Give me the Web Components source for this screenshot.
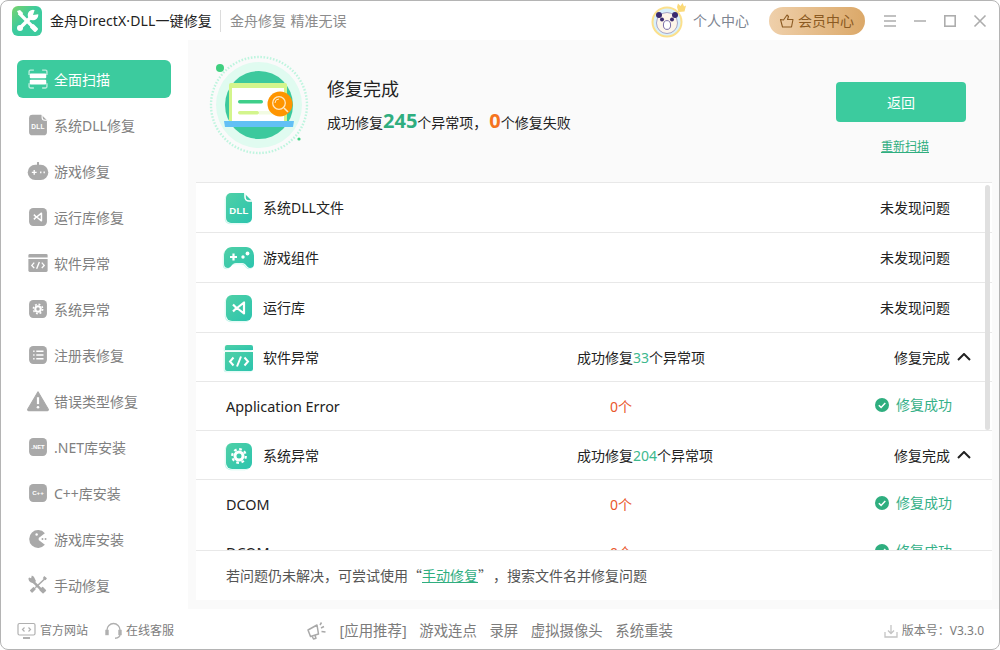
<!DOCTYPE html>
<html lang="zh-CN">
<head>
<meta charset="utf-8">
<title>金舟DirectX·DLL一键修复</title>
<style>
html, body { margin: 0; background: #fff; }
body { width: 1000px; height: 650px; overflow: hidden; font-family: "Noto Sans", "Noto Sans CJK SC", sans-serif; }
</style>
</head>
<body>
<app-window>
    <title-bar slot="top"></title-bar>
    <side-nav slot="side">
        <nav-item icon="scan" active>全面扫描</nav-item>
        <nav-item icon="dll">系统DLL修复</nav-item>
        <nav-item icon="bot">游戏修复</nav-item>
        <nav-item icon="vs">运行库修复</nav-item>
        <nav-item icon="code">软件异常</nav-item>
        <nav-item icon="gear">系统异常</nav-item>
        <nav-item icon="list">注册表修复</nav-item>
        <nav-item icon="warn">错误类型修复</nav-item>
        <nav-item icon="net">.NET库安装</nav-item>
        <nav-item icon="cpp">C++库安装</nav-item>
        <nav-item icon="pac">游戏库安装</nav-item>
        <nav-item icon="tools">手动修复</nav-item>
    </side-nav>
    <result-hero slot="main" fixed="245" failed="0"></result-hero>
    <result-list slot="main">
        <scan-row icon="dll" status="未发现问题">系统DLL文件</scan-row>
        <scan-row icon="game" status="未发现问题">游戏组件</scan-row>
        <scan-row icon="vs" status="未发现问题">运行库</scan-row>
        <scan-row icon="code" count="33" status="修复完成" short>软件异常</scan-row>
        <detail-row>Application Error</detail-row>
        <scan-row icon="gear" count="204" status="修复完成" short>系统异常</scan-row>
        <detail-row noline>DCOM</detail-row>
        <detail-row noline>DCOM</detail-row>
    </result-list>
    <foot-bar slot="bottom"></foot-bar>
</app-window>

<script>
// all the artwork sits in a 32x32 box, c = body colour, h = colour of the holes
const glyphs = {
    scan: (c, h) => `
        <path d="M3 10V5a2 2 0 0 1 2-2h5M22 3h5a2 2 0 0 1 2 2v5M29 22v5a2 2 0 0 1-2 2h-5M10 29H5a2 2 0 0 1-2-2v-5" fill="none" stroke="${c}" stroke-width="2" opacity=".65"/>
        <rect x="4" y="8" width="24" height="7" rx="1.5" fill="${c}"/>
        <rect x="4" y="17" width="24" height="7" rx="1.5" fill="${c}"/>`,
    dll: (c, h) => `
        <path d="M8 1h13l8 8v17a5 5 0 0 1-5 5H8a5 5 0 0 1-5-5V6a5 5 0 0 1 5-5z" fill="${c}"/>
        <path d="M22 0v5a4 4 0 0 0 4 4h4" fill="none" stroke="${h}" stroke-width="1.6"/>
        <text x="16" y="22" text-anchor="middle" font-family="Liberation Sans" font-weight="700" font-size="9.500" letter-spacing=".3" fill="${h}">DLL</text>`,
    bot: (c, h) => `
        <rect x="14.5" y="3" width="3" height="6" fill="${c}"/>
        <rect x="1" y="7" width="30" height="22" rx="11" fill="${c}"/>
        <path d="M7 18h7M10.5 14.5v7" stroke="${h}" stroke-width="2"/>
        <path d="M19 18h2M24 18h2" stroke="${h}" stroke-width="2.4"/>`,
    game: (c, h) => `
        <path d="M9 5h14c5 0 8 4 8 9v8c0 3-2 4-4 4-3 0-4-5-8-5h-6c-4 0-5 5-8 5-2 0-4-1-4-4v-8c0-5 3-9 8-9z" fill="${c}"/>
        <path d="M7 15h7M10.5 11.5v7" stroke="${h}" stroke-width="2.2"/>
        <circle cx="20" cy="15" r="1.7" fill="${h}"/><circle cx="24.5" cy="11.5" r="1.9" fill="${h}"/>`,
    vs: (c, h) => `
        <rect x="3" y="3" width="26" height="26" rx="6" fill="${c}"/>
        <path d="M10 12.500l3.500 3.500-3.500 3.500M21 10.500v11L14 16z" fill="none" stroke="${h}" stroke-width="2.200" stroke-linejoin="round"/>`,
    code: (c, h) => `
        <path d="M4 3h24a2 2 0 0 1 2 2v3H2V5a2 2 0 0 1 2-2z" fill="${c}"/>
        <path d="M2 10h28v17a2 2 0 0 1-2 2H4a2 2 0 0 1-2-2z" fill="${c}"/>
        <path d="M10.5 15.5L7 19.5l3.5 4M21.5 15.5l3.5 4-3.5 4M18 14.5l-4 10" fill="none" stroke="${h}" stroke-width="2"/>`,
    gear: (c, h) => `
        <rect x="3" y="3" width="26" height="26" rx="6" fill="${c}"/>
        <circle cx="16" cy="16" r="6.800" fill="none" stroke="${h}" stroke-width="2.200" stroke-dasharray="2.700 2.640"/>
        <circle cx="16" cy="16" r="4" fill="none" stroke="${h}" stroke-width="3"/>`,
    list: (c, h) => `
        <rect x="3" y="3" width="26" height="26" rx="6" fill="${c}"/>
        <path d="M9 10.5h2M9 16h2M9 21.5h2M13.5 10.5H24M13.5 16H24M13.5 21.5H24" stroke="${h}" stroke-width="2.2"/>`,
    warn: (c, h) => `
        <path d="M16 2.5L31 28a1.5 1.5 0 0 1-1.3 2H2.3A1.5 1.5 0 0 1 1 28z" fill="${c}" stroke="${c}" stroke-linejoin="round" stroke-width="1.5"/>
        <path d="M16 10.5v10" stroke="${h}" stroke-width="3.2"/><circle cx="16" cy="25" r="1.9" fill="${h}"/>`,
    net: (c, h) => `
        <rect x="3" y="3" width="26" height="26" rx="6" fill="${c}"/>
        <text x="16" y="19.5" text-anchor="middle" font-family="Liberation Sans" font-weight="700" font-size="8.5" fill="${h}">.NET</text>`,
    cpp: (c, h) => `
        <rect x="3" y="3" width="26" height="26" rx="6" fill="${c}"/>
        <text x="16" y="19.5" text-anchor="middle" font-family="Liberation Sans" font-weight="700" font-size="9" fill="${h}">C++</text>`,
    pac: (c, h) => `
        <path d="M26 7.5a13 13 0 1 0 0 17L17 17.5v-3z" fill="${c}"/>
        <circle cx="14" cy="9.5" r="1.8" fill="${h}"/>
        <circle cx="22.5" cy="16" r="1.4" fill="${c}"/><circle cx="27" cy="16" r="1.4" fill="${c}"/>`,
    tools: (c, h) => `
        <path d="M9 11l12 12" stroke="${c}" stroke-width="3.600"/>
        <path d="M2 7a7 7 0 0 0 9 6l2-3-3-6 -3-2-1 4-3-1z" fill="${c}"/>
        <path d="M27 6L12 20" stroke="${c}" stroke-width="2" fill="none"/>
        <path d="M25 3l4 3-2 3-4-3z" fill="${c}"/>
        <rect x="6" y="19" width="5" height="8" rx="1" transform="rotate(45 8.500 23)" fill="${c}"/>
        <rect x="19" y="20" width="8" height="7" rx="1" transform="rotate(45 23 23.500)" fill="${c}"/>`
}

class AppIcon extends HTMLElement {
    constructor() {
        super()
        this.attachShadow({mode: "open"})
    }

    connectedCallback() {
        const name = this.getAttribute("name")
        const size = this.getAttribute("size") || 22
        const tone = this.getAttribute("tone") || "grey"
        let body = ""
        if (tone === "teal") {
            const id = "t" + name
            // the pale offset outline behind the coloured list icons
            body = `
                <defs><linearGradient id="${id}" x1="0" y1="0" x2="1" y2="1">
                    <stop offset="0" stop-color="#4fd0a6"/><stop offset="1" stop-color="#2cc4ae"/>
                </linearGradient></defs>
                <g transform="translate(-1.200 1.200)">${glyphs[name]("#c6f6ec", "#c6f6ec")}</g>
                <g transform="translate(-.5 .5)">${glyphs[name]("#fff", "#fff")}</g>
                ${glyphs[name](`url(#${id})`, "#fff")}`
        } else if (tone === "white") {
            body = glyphs[name]("#fff", "#3ccb9e")
        } else {
            body = glyphs[name]("#a9a9a9", "#fff")
        }
        this.shadowRoot.innerHTML = `
            <style>
            :host { display: inline-flex; flex: none; width: ${size}px; height: ${size}px; }
            svg { display: block; width: 100%; height: 100%; overflow: visible; }
            </style>
            <svg viewBox="0 0 32 32">${body}</svg>
        `
    }
}

class AppWindow extends HTMLElement {
    constructor() {
        super()
        this.attachShadow({mode: "open"}).innerHTML = `
            <style>
            :host {
                display: grid;
                grid-template: 39px 569px 40px / 187px 1fr;
                width: 1000px;
                height: 650px;
                box-sizing: border-box;
                border: 1px solid #b4b4b4;
                border-radius: 8px;
                overflow: hidden;
                background: #fff;
            }
            ::slotted([slot=top]), ::slotted([slot=bottom]) { grid-column: 1 / 3; }
            .main {
                display: flex;
                flex-direction: column;
                background: #fafafa;
                min-width: 0;
            }
            </style>
            <slot name="top"></slot>
            <slot name="side"></slot>
            <div class="main"><slot name="main"></slot></div>
            <slot name="bottom"></slot>
        `
    }
}

class TitleBar extends HTMLElement {
    constructor() {
        super()
        this.attachShadow({mode: "open"}).innerHTML = `
            <style>
            :host {
                display: flex;
                align-items: center;
                font-size: 14px;
                line-height: 20px;
                color: #222;
                padding-left: 11px;
            }
            .logo { width: 30px; height: 30px; margin-right: 8px; flex: none; }
            .name { letter-spacing: .12px; }
            .sep { width: 1px; height: 22px; background: #dcdcdc; margin: 0 9px 0 8px; }
            .sub { color: #8c8c8c; word-spacing: 1px; }
            .user { margin-left: auto; display: flex; align-items: center; color: #7d8490; }
            .avatar { width: 38px; height: 38px; margin-right: 6px; flex: none; }
            .vip {
                display: flex;
                align-items: center;
                gap: 3px;
                width: 96px;
                height: 28px;
                box-sizing: border-box;
                padding-left: 10px;
                margin-left: 20px;
                border-radius: 14px;
                background: linear-gradient(90deg, #efd0ab, #dba868);
                color: #8b5a22;
            }
            .ctrl { display: flex; align-items: center; margin: 0 12px 0 18px; gap: 16px; }
            .ctrl svg { display: block; width: 14px; height: 14px; fill: none; stroke: #adadad; stroke-width: 1.6; }
            </style>
            <svg class="logo" viewBox="0 0 30 30">
                <defs><linearGradient id="lg" x1="0" y1="0" x2="1" y2="1">
                    <stop offset="0" stop-color="#7bd36c"/><stop offset=".45" stop-color="#3ccb9e"/><stop offset="1" stop-color="#3ccb9e"/>
                </linearGradient></defs>
                <rect width="30" height="30" rx="6" fill="url(#lg)"/>
                <path d="M7 7l15 15" stroke="#fff" stroke-width="3.200"/>
                <path d="M5 5l3-1 3 3-1 3-3-1z" fill="#fff"/>
                <path d="M21 9L8.500 21.500" stroke="#fff" stroke-width="3.600"/>
                <circle cx="21" cy="9" r="5.300" fill="#fff"/>
                <path d="M21 9l2-6 5 5z" fill="#46cb97"/>
                <circle cx="8" cy="22" r="3" fill="#fff"/>
                <rect x="19.500" y="18" width="5" height="8" rx="1.500" transform="rotate(-45 22 22)" fill="#fff"/>
            </svg>
            <span class="name">金舟DirectX·DLL一键修复</span>
            <span class="sep"></span>
            <span class="sub">金舟修复 精准无误</span>
            <div class="user">
                <svg class="avatar" viewBox="0 0 38 38">
                    <circle cx="18" cy="20" r="15.5" fill="#fbe08c"/>
                    <circle cx="18" cy="20" r="13.5" fill="#d8f0fb"/>
                    <circle cx="18" cy="21" r="10.5" fill="#fdf5e9" stroke="#7a6ea8" stroke-width=".6"/>
                    <circle cx="10" cy="13" r="3" fill="#3a2b70"/><circle cx="26" cy="13" r="3" fill="#3a2b70"/>
                    <circle cx="13" cy="17.500" r="2" fill="#3a2b70"/><circle cx="23" cy="17.500" r="2" fill="#3a2b70"/>
                    <ellipse cx="18" cy="23" rx="3.600" ry="4.400" fill="#fff" stroke="#7a6ea8"/>
                    <path d="M28 5l1-3.500 2.500 2.500 2-3 1.500 3.500 2-1-1.500 6-6 .5z" fill="#fbd978"/>
                </svg>
                <span>个人中心</span>
                <div class="vip">
                    <svg width="16" height="16" viewBox="0 0 16 16" fill="none" stroke="#8b5a22" stroke-width="1.100" stroke-linejoin="round">
                        <path d="M1.500 6.500l3 .5L8 2l1.500 1.500L8.500 6.500h5.500l-1.500 7.500H3.500z"/>
                    </svg>
                    <span>会员中心</span>
                </div>
            </div>
            <div class="ctrl">
                <svg viewBox="0 0 14 14"><path d="M1 2h12M1 7h12M1 12h12"/></svg>
                <svg viewBox="0 0 14 14"><path d="M1 7h12"/></svg>
                <svg viewBox="0 0 14 14"><rect x="1.800" y="1.800" width="10.400" height="10.400"/></svg>
                <svg viewBox="0 0 14 14"><path d="M1.500 1.500l11 11M12.500 1.500l-11 11"/></svg>
            </div>
        `
    }
}

class SideNav extends HTMLElement {
    constructor() {
        super()
        this.attachShadow({mode: "open"}).innerHTML = `
            <style>
            :host {
                display: flex;
                flex-direction: column;
                gap: 8px;
                padding: 20px 17px 0 16px;
                overflow: hidden;
            }
            </style>
            <slot></slot>
        `
    }
}

class NavItem extends HTMLElement {
    constructor() {
        super()
        const active = this.hasAttribute("active")
        this.attachShadow({mode: "open"}).innerHTML = `
            <style>
            :host {
                display: flex;
                align-items: center;
                flex: none;
                gap: 5px;
                height: 38px;
                padding-left: 10px;
                font-size: 14px;
                line-height: 20px;
                color: ${active ? "#fff" : "#808080"};
                background: ${active ? "#3ccb9e" : "transparent"};
                border-radius: 6px;
            }
            .text { padding-top: 2px; }
            </style>
            <app-icon name="${this.getAttribute("icon")}" tone="${active ? "white" : "grey"}"></app-icon>
            <span class="text"><slot></slot></span>
        `
    }
}

class ResultHero extends HTMLElement {
    constructor() {
        super()
        this.attachShadow({mode: "open"}).innerHTML = `
            <style>
            :host {
                display: flex;
                align-items: flex-start;
                height: 142px;
                flex: none;
                box-sizing: border-box;
                padding: 15px 0 0 21px;
            }
            .art { width: 100px; height: 100px; flex: none; margin-right: 18px; }
            .info { padding-top: 22px; color: #222; }
            h2 { margin: 0 0 5px; font-size: 18px; line-height: 24px; font-weight: 400; }
            p { margin: 0; font-size: 14px; line-height: 30px; display: flex; align-items: baseline; }
            b { font-size: 20px; font-weight: 700; }
            .ok { color: #2fae7f; }
            .bad { color: #f5741f; margin-left: 2px; }
            .act {
                margin-left: auto;
                margin-right: 33px;
                padding-top: 27px;
                display: flex;
                flex-direction: column;
                align-items: center;
                width: 130px;
            }
            .back {
                width: 130px;
                height: 40px;
                display: flex;
                align-items: center;
                justify-content: center;
                background: #3ccb9e;
                color: #fff;
                font-size: 14px;
                border-radius: 4px;
            }
            a { margin: 16px 0 0 8px; font-size: 12px; line-height: 18px; color: #2fae7f; text-decoration: underline; }
            </style>
            <svg class="art" viewBox="0 0 100 100">
                <circle cx="50" cy="50" r="48" fill="none" stroke="#bff5df" stroke-width="2.400" stroke-dasharray="1.600 1.600"/>
                <circle cx="50" cy="50" r="43" fill="#e0fbf0"/>
                <circle cx="50" cy="50" r="34" fill="#3cc99d"/>
                <circle cx="11" cy="13" r="4" fill="#3fcf7f"/>
                <circle cx="90" cy="84" r="1.600" fill="#3fcf7f"/>
                <path d="M22 28h54a2 2 0 0 1 2 2v38H20V30a2 2 0 0 1 2-2z" fill="#d3f58c"/>
                <rect x="23" y="33" width="52" height="33" fill="#fff"/>
                <rect x="29" y="45" width="25" height="3.500" rx="1.700" fill="#3fcf8a"/>
                <rect x="29" y="56" width="21" height="3.500" rx="1.700" fill="#d3f58c"/>
                <rect x="50" y="56" width="20" height="3.500" fill="#f2fbe2"/>
                <path d="M15 66h70l-1 6H16z" fill="#62c0f5"/>
                <circle cx="71" cy="49" r="12.500" fill="#ff9500"/>
                <circle cx="70" cy="48" r="6.300" fill="none" stroke="#ffe9c4" stroke-width="1.300"/>
                <path d="M66 48a4 4 0 0 1 4-4" fill="none" stroke="#ffe9c4"/>
                <path d="M75 53l4 4" stroke="#ffe9c4" stroke-width="1.600"/>
            </svg>
            <div class="info">
                <h2>修复完成</h2>
                <p>成功修复<b class="ok">${this.getAttribute("fixed")}</b>个异常项，<b class="bad">${this.getAttribute("failed")}</b>个修复失败</p>
            </div>
            <div class="act">
                <div class="back">返回</div>
                <a>重新扫描</a>
            </div>
        `
    }
}

class ResultList extends HTMLElement {
    constructor() {
        super()
        this.attachShadow({mode: "open"}).innerHTML = `
            <style>
            :host {
                display: flex;
                flex-direction: column;
                height: 418px;
                flex: none;
                margin: 0 7px 0 8px;
                background: #fff;
                border-top: 1px solid #e8e8e8;
                box-sizing: border-box;
                position: relative;
            }
            .rows { height: 367px; overflow: hidden; flex: none; }
            .thumb {
                position: absolute;
                top: 2px;
                right: 2px;
                width: 5px;
                height: 245px;
                border-radius: 3px;
                background: #e0e0e0;
            }
            .note {
                flex: 1;
                display: flex;
                align-items: center;
                padding: 0 0 2px 30px;
                border-top: 1px solid #e8e8e8;
                font-family: "Noto Sans CJK SC", sans-serif;
                font-size: 14px;
                color: #555;
            }
            a { color: #2fae7f; text-decoration: underline; }
            .q { margin-right: 8px; }
            </style>
            <div class="rows"><slot></slot></div>
            <div class="thumb"></div>
            <div class="note"><span>若问题仍未解决，可尝试使用“<a>手动修复</a><span class="q">”</span>，搜索文件名并修复问题</span></div>
        `
    }
}

class ScanRow extends HTMLElement {
    constructor() {
        super()
        const count = this.getAttribute("count")
        const short = this.hasAttribute("short")
        this.attachShadow({mode: "open"}).innerHTML = `
            <style>
            :host {
                display: grid;
                grid-template-columns: 32px 8px 314px 1fr auto 22px;
                align-items: center;
                height: ${short ? 47 : 49}px;
                padding: ${short ? 1 : 0}px 20px 0 27px;
                border-bottom: 1px solid #e8e8e8;
                font-size: 14px;
                line-height: 20px;
                color: #222;
            }
            .name { grid-column: 3; }
            i { font-style: normal; color: #3cb88e; }
            svg { justify-self: end; margin: 0 1px 2px 0; }
            </style>
            <app-icon name="${this.getAttribute("icon")}" tone="teal" size="32"></app-icon>
            <span class="name"><slot></slot></span>
            <span>${count ? `成功修复<i>${count}</i>个异常项` : ""}</span>
            <span>${this.getAttribute("status")}</span>
            ${count ? `<svg width="14" height="8" viewBox="0 0 14 8" fill="none" stroke="#222" stroke-width="2"><path d="M1 7l6-6 6 6"/></svg>` : ""}
        `
    }
}

class DetailRow extends HTMLElement {
    constructor() {
        super()
        this.attachShadow({mode: "open"}).innerHTML = `
            <style>
            :host {
                display: grid;
                grid-template-columns: 384px 1fr auto;
                align-items: center;
                height: 48px;
                padding: 0 40px 0 30px;
                border-bottom: 1px solid #e8e8e8;
                font-size: 14px;
                line-height: 20px;
                color: #222;
            }
            :host([noline]) { border-bottom: 0; }
            .zero { color: #e9572b; margin-top: 2px; }
            .done { display: flex; align-items: center; gap: 7px; color: #35b088; margin-bottom: 2px; }
            .name { font-size: 14.400px; margin-top: 2px; }
            svg { display: block; }
            </style>
            <span class="name"><slot></slot></span>
            <span class="zero">0个</span>
            <span class="done">
                <svg width="14" height="14" viewBox="0 0 14 14"><circle cx="7" cy="7" r="7" fill="#2fae7f"/><path d="M3.800 7.200l2.300 2.200 4.200-4.300" fill="none" stroke="#fff" stroke-width="1.500"/></svg>
                修复成功
            </span>
        `
    }
}

class FootBar extends HTMLElement {
    constructor() {
        super()
        this.attachShadow({mode: "open"}).innerHTML = `
            <style>
            :host {
                display: flex;
                align-items: center;
                padding: 3px 0 0 16px;
                color: #7c7c7c;
                font-size: 12px;
                line-height: 18px;
            }
            .left { display: flex; align-items: center; width: 290px; flex: none; }
            .left svg { margin-right: 4px; flex: none; }
            .left span + svg { margin-left: 17px; }
            .apps { display: flex; align-items: center; font-size: 14.400px; gap: 12.600px; }
            .ver { margin-left: auto; margin-right: 15px; display: flex; align-items: center; gap: 4px; }
            svg { display: block; fill: none; }
            </style>
            <div class="left">
                <svg width="19" height="18" viewBox="0 0 19 18" stroke="#b0b0b0" stroke-width="1.200">
                    <rect x="1" y="1.500" width="17" height="11.500" rx="1.500"/>
                    <path d="M7.500 5.500l-2 2 2 2M11.500 5.500l2 2-2 2"/>
                    <path d="M6 16h7" stroke-width="2"/>
                </svg>
                <span>官方网站</span>
                <svg width="17" height="18" viewBox="0 0 17 18" stroke="#b0b0b0" stroke-width="1.400">
                    <path d="M2 10V8a6.500 6.500 0 0 1 13 0v2"/>
                    <rect x="1" y="8.500" width="2" height="4" fill="#b0b0b0"/>
                    <rect x="14" y="8.500" width="2" height="4" fill="#b0b0b0"/>
                    <path d="M15 12.500c0 2.500-2 3.500-5 3.800"/>
                </svg>
                <span>在线客服</span>
            </div>
            <div class="apps">
                <svg width="20" height="18" viewBox="0 0 20 18" stroke="#a9a9a9" stroke-width="1.500" stroke-linejoin="round">
                    <path d="M1 8l9-5 1.500 9-8 2.500zM5 14l1.500 3 2.500-.8-1-3"/>
                    <path d="M14 6l3-1.500M14.500 9.500l4 .5M13 3l1.500-2.500"/>
                </svg>
                <span>[应用推荐]</span>
                <span>游戏连点</span>
                <span>录屏</span>
                <span>虚拟摄像头</span>
                <span>系统重装</span>
            </div>
            <div class="ver">
                <svg width="14" height="14" viewBox="0 0 14 14" stroke="#c4c4c4" stroke-width="1.300">
                    <path d="M7 1v8M4 6.500L7 9.500l3-3M1 8v5h12V8"/>
                </svg>
                <span>版本号：V3.3.0</span>
            </div>
        `
    }
}

customElements.define("app-icon", AppIcon)
customElements.define("app-window", AppWindow)
customElements.define("title-bar", TitleBar)
customElements.define("side-nav", SideNav)
customElements.define("nav-item", NavItem)
customElements.define("result-hero", ResultHero)
customElements.define("result-list", ResultList)
customElements.define("scan-row", ScanRow)
customElements.define("detail-row", DetailRow)
customElements.define("foot-bar", FootBar)
</script>
</body>
</html>
